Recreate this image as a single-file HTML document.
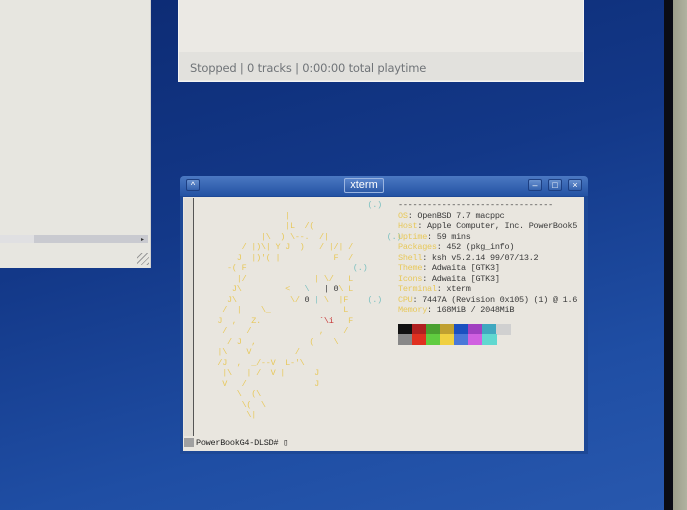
<!DOCTYPE html>
<html><head><meta charset="utf-8"><style>
*{margin:0;padding:0;box-sizing:border-box}
body{width:687px;height:510px;overflow:hidden;position:relative;font-family:"Liberation Sans",sans-serif;
background:linear-gradient(165deg,#0c2a72 0%,#133888 40%,#1f4ea4 75%,#2858ae 100%)}
.abs{position:absolute}
#bezel{left:664px;top:0;width:9px;height:510px;background:#0a0c14}
#edge{left:673px;top:0;width:14px;height:510px;background:linear-gradient(90deg,#9c9e8a,#b0b2a0)}
#lw{left:0;top:0;width:151px;height:268px;background:#e7e6e0;border-right:1px solid #cfcfcf}
#lsb{left:0;top:235px;width:148px;height:8px;background:#c9cad0}
#lsb2{left:0;top:235px;width:34px;height:8px;background:#e0e0e2}
#tw{left:178px;top:0;width:406px;height:82px;background:#ebe9e4;border:1px solid #f4f4f4;border-top:none}
#st{left:179px;top:52px;width:404px;height:28px;background:#e2e1dd}
#st span{position:absolute;left:11px;top:9px;font-size:11.5px;color:#707478;font-family:"DejaVu Sans",sans-serif;letter-spacing:-0.2px}
#xt{left:180px;top:176px;width:408px;height:278px;background:#1d4896;border-radius:4px 4px 0 0}
#tb{left:180px;top:176px;width:408px;height:20px;border-radius:4px 4px 0 0;background:linear-gradient(#4b78c2,#2352a3)}
.btn{position:absolute;top:3px;width:14px;height:12px;border-radius:2px;background:linear-gradient(#6a92d0,#3462ae);border:1px solid #1d3f82;color:#fff;font-size:9px;text-align:center;line-height:10px}
#title{position:absolute;left:164px;top:2px;width:40px;height:15px;border-radius:2px;background:linear-gradient(#5c86cc,#2c59a6);border:1px solid #9ab4e0;color:#fff;font-size:11px;text-align:center;line-height:13px}
#body{left:183px;top:197px;width:401px;height:254px;background:#e9e6df}
#sb{left:184px;top:198px;width:10px;height:238px;background:#e0ddd6;border-right:1px solid #555}
#sbb{left:184px;top:438px;width:10px;height:9px;background:#a0a0a0}
pre{font-family:"Liberation Mono","DejaVu Sans Mono",monospace;font-size:8.5px;line-height:10.5px;color:#3a3a3a;position:absolute;letter-spacing:-0.26px}
.y{color:#e8c85a}.c{color:#7cc0c0}.r{color:#c83a3a}
.sw{position:absolute;width:14.5px;height:10.5px}
</style></head><body>
<div class="abs" id="bezel"></div><div class="abs" id="edge"></div>
<div class="abs" id="lw"></div><div class="abs" id="lsb"></div><div class="abs" id="lsb2"></div>
<div class="abs" style="left:141px;top:236px;font-size:6px;color:#333">▸</div>
<div class="abs" style="left:137px;top:253px;width:12px;height:12px;background:repeating-linear-gradient(135deg,transparent 0 3px,#999 3px 4px)"></div>
<div class="abs" id="tw"></div>
<div class="abs" id="st"><span>Stopped | 0 tracks | 0:00:00 total playtime</span></div>
<div class="abs" id="xt"></div>
<div class="abs" id="tb">
<div class="btn" style="left:6px">^</div>
<div id="title">xterm</div>
<div class="btn" style="left:348px">–</div>
<div class="btn" style="left:368px">□</div>
<div class="btn" style="left:388px">×</div>
</div>
<div class="abs" id="body"></div>
<div class="abs" id="sb"></div><div class="abs" id="sbb"></div>
<pre style="left:198px;top:200px"><span class="y">                                   </span><span class="c">(.)</span>
<span class="y">                  |
                  |L  /(
             |\  ) \--.  /|            </span><span class="c">(.)</span><span class="y">
         / |)\| Y J  )   / |/| /
        J  |)'( |           F  /
      -( F                      </span><span class="c">(.)</span><span class="y">
        |/              | \/   L
       J\         &lt;   </span><span class="c">\</span>   | </span>0<span class="y">\ L
      J\           \/ </span>0<span class="c"> | </span><span class="y">\  |F    </span><span class="c">(.)</span><span class="y">
     /  |    \_               L
    J  ,   Z.            </span><span class="r">`\i</span><span class="y">   F
     /    /              ,    /
      / J  ,           (    \
    |\    V         /
    /J  ,  _/--V  L-'\
     |\   | /  V |      J
     V   /              J
        \  (\
         \(  \
          \|</span></pre>
<pre style="left:398px;top:200px">--------------------------------
<span class="y">OS</span>: OpenBSD 7.7 macppc
<span class="y">Host</span>: Apple Computer, Inc. PowerBook5
<span class="y">Uptime</span>: 59 mins
<span class="y">Packages</span>: 452 (pkg_info)
<span class="y">Shell</span>: ksh v5.2.14 99/07/13.2
<span class="y">Theme</span>: Adwaita [GTK3]
<span class="y">Icons</span>: Adwaita [GTK3]
<span class="y">Terminal</span>: xterm
<span class="y">CPU</span>: 7447A (Revision 0x105) (1) @ 1.6
<span class="y">Memory</span>: 168MiB / 2048MiB</pre>
<div class="sw" style="left:398px;top:324px;background:#111"></div>
<div class="sw" style="left:412px;top:324px;background:#b02020"></div>
<div class="sw" style="left:426px;top:324px;background:#4aa030"></div>
<div class="sw" style="left:440px;top:324px;background:#c0a030"></div>
<div class="sw" style="left:454px;top:324px;background:#1a50c0"></div>
<div class="sw" style="left:468px;top:324px;background:#a040c0"></div>
<div class="sw" style="left:482px;top:324px;background:#40a8c0"></div>
<div class="sw" style="left:496px;top:324px;background:#d0d0d0"></div>
<div class="sw" style="left:398px;top:334px;background:#888"></div>
<div class="sw" style="left:412px;top:334px;background:#e03020"></div>
<div class="sw" style="left:426px;top:334px;background:#60cc40"></div>
<div class="sw" style="left:440px;top:334px;background:#f0d040"></div>
<div class="sw" style="left:454px;top:334px;background:#4a78d8"></div>
<div class="sw" style="left:468px;top:334px;background:#d060e0"></div>
<div class="sw" style="left:482px;top:334px;background:#60d8d0"></div>
<pre style="left:196px;top:438px;color:#222">PowerBookG4-DLSD# ▯</pre>
</body></html>
